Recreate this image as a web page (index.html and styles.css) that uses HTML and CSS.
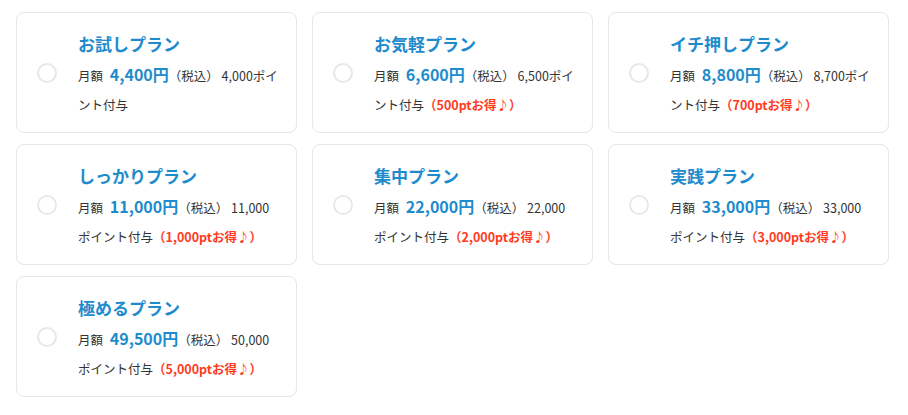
FILE: index.html
```html
<!DOCTYPE html>
<html lang="ja">
<head>
  <meta charset="UTF-8" />
  <meta name="viewport" content="width=device-width, initial-scale=1.0"/>
  <title>プラン選択</title>
  <link rel="stylesheet" href="styles.css">
</head>
<body>

  <div class="planes">
    <label class="plan">
      <span class="radio"></span>
      <span class="info">
        <span class="nombre">お試しプラン</span>
        <span class="detalle">月額 <b class="precio">4,400円</b><small>（税込）</small> 4,000ポイント付与</span>
      </span>
    </label>

    <label class="plan">
      <span class="radio"></span>
      <span class="info">
        <span class="nombre">お気軽プラン</span>
        <span class="detalle">月額 <b class="precio">6,600円</b><small>（税込）</small> 6,500ポイント付与<em>（500ptお得♪）</em></span>
      </span>
    </label>

    <label class="plan">
      <span class="radio"></span>
      <span class="info">
        <span class="nombre">イチ押しプラン</span>
        <span class="detalle">月額 <b class="precio">8,800円</b><small>（税込）</small> 8,700ポイント付与<em>（700ptお得♪）</em></span>
      </span>
    </label>

    <label class="plan">
      <span class="radio"></span>
      <span class="info">
        <span class="nombre">しっかりプラン</span>
        <span class="detalle">月額 <b class="precio">11,000円</b><small>（税込）</small> 11,000ポイント付与<em>（1,000ptお得♪）</em></span>
      </span>
    </label>

    <label class="plan">
      <span class="radio"></span>
      <span class="info">
        <span class="nombre">集中プラン</span>
        <span class="detalle">月額 <b class="precio">22,000円</b><small>（税込）</small> 22,000ポイント付与<em>（2,000ptお得♪）</em></span>
      </span>
    </label>

    <label class="plan">
      <span class="radio"></span>
      <span class="info">
        <span class="nombre">実践プラン</span>
        <span class="detalle">月額 <b class="precio">33,000円</b><small>（税込）</small> 33,000ポイント付与<em>（3,000ptお得♪）</em></span>
      </span>
    </label>

    <label class="plan">
      <span class="radio"></span>
      <span class="info">
        <span class="nombre">極めるプラン</span>
        <span class="detalle">月額 <b class="precio">49,500円</b><small>（税込）</small> 50,000ポイント付与<em>（5,000ptお得♪）</em></span>
      </span>
    </label>
  </div>

</body>
</html>
```

FILE: styles.css
```css
body {
  font-family: "Noto Sans CJK JP", "Noto Sans", sans-serif;
  margin: 0;
  background: #fff;
  color: #333;
}
.planes {
  display: grid;
  grid-template-columns: repeat(3, 281px);
  column-gap: 15px;
  row-gap: 11px;
  padding: 12px 16px;
}
.plan {
  display: flex;
  align-items: center;
  height: 121px;
  box-sizing: border-box;
  border: 1px solid #e6e6e6;
  border-radius: 8px;
  padding: 0 17px 0 20px;
  cursor: pointer;
}
.radio {
  flex: none;
  width: 20px;
  height: 20px;
  box-sizing: border-box;
  border: 2px solid #e8e8e8;
  border-radius: 50%;
  margin-right: 21px;
}
.info {
  display: block;
  padding-top: 4px;
}
.nombre {
  display: block;
  font-size: 17px;
  font-weight: bold;
  color: #1e8bcd;
  line-height: 26px;
  margin-bottom: 3px;
}
.detalle {
  display: block;
  font-size: 12.5px;
  line-height: 29px;
}
.precio {
  font-size: 16px;
  color: #1e8bcd;
  margin-left: 4px;
}
.detalle small {
  font-size: 12.5px;
}
.detalle em {
  font-style: normal;
  font-weight: bold;
  color: #ff3b1f;
}
```
